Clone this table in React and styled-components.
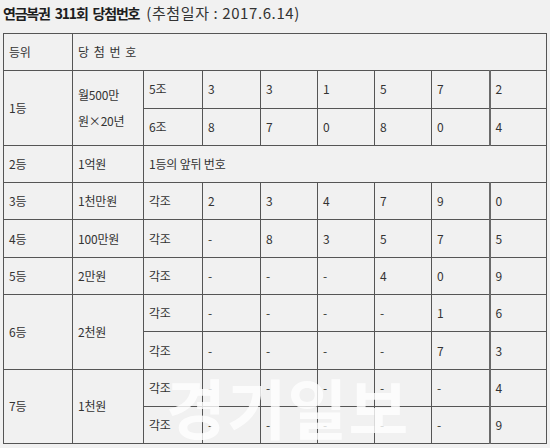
import styled, { createGlobalStyle } from 'styled-components'

const GlobalStyle = createGlobalStyle`
  html, body {
    margin: 0;
    padding: 0;
    background: #f1f1f1;
  }
  body {
    font-family: 'Noto Sans CJK KR', 'Noto Sans', sans-serif;
    color: #333;
    overflow: hidden;
  }
`

const COLS = [69, 71, 59, 58, 57, 57, 57, 58, 57]

const Page = styled.div`
  position: relative;
  width: 550px;
  height: 448px;
  overflow: hidden;
  padding: 2px 0 0 3px;
  box-sizing: border-box;
`

const TitleRow = styled.div`
  display: flex;
  align-items: baseline;
  gap: 7px;
  height: 31px;
  line-height: 22px;
  color: #222;
`

const Title = styled.h2`
  margin: 0;
  font-size: 14px;
  font-weight: 700;
  letter-spacing: -1.2px;
  word-spacing: 3px;
  color: #1e1e1e;
`

const DrawDate = styled.span`
  font-size: 15px;
  letter-spacing: 0.6px;
  color: #333;
`

const Table = styled.table`
  border-collapse: collapse;
  table-layout: fixed;
  width: 544px;
  border: 1px solid #555;
`

const Cell = styled.td`
  border: 1px solid #555;
  border-right: ${(p) => (p.$thick ? '2px solid #6a6a6a' : '1px solid #555')};
  padding: 0 0 0 5px;
  height: 36.3px;
  font-size: 12px;
  line-height: ${(p) => (p.$tall ? 26 : 20)}px;
  color: #333;
  text-align: left;
  vertical-align: middle;
  letter-spacing: ${(p) => (p.$spaced ? '1px' : '-0.2px')};
`

const Watermark = styled.div`
  position: absolute;
  left: 166px;
  top: 359px;
  font-size: 65px;
  font-weight: 700;
  letter-spacing: 1px;
  color: rgba(255, 255, 255, 0.8);
  pointer-events: none;
  white-space: nowrap;
`

const Digits = ({ values }) =>
  values.map((v, i) => (
    <Cell key={i} $thick={i === 4}>
      {v}
    </Cell>
  ))

const App = () => (
  <Page>
    <GlobalStyle />
    <TitleRow>
      <Title>연금복권 311회 당첨번호</Title>
      <DrawDate>(추첨일자 : 2017.6.14)</DrawDate>
    </TitleRow>
    <Table>
      <colgroup>
        {COLS.map((w, i) => (
          <col key={i} style={{ width: w }} />
        ))}
      </colgroup>
      <tbody>
        <tr>
          <Cell>등위</Cell>
          <Cell colSpan={8} $spaced>
            당 첨 번 호
          </Cell>
        </tr>
        <tr>
          <Cell rowSpan={2}>1등</Cell>
          <Cell rowSpan={2} $tall>
            월500만
            <br />
            원×20년
          </Cell>
          <Cell>5조</Cell>
          <Digits values={['3', '3', '1', '5', '7', '2']} />
        </tr>
        <tr>
          <Cell>6조</Cell>
          <Digits values={['8', '7', '0', '8', '0', '4']} />
        </tr>
        <tr>
          <Cell>2등</Cell>
          <Cell>1억원</Cell>
          <Cell colSpan={7}>1등의 앞뒤 번호</Cell>
        </tr>
        <tr>
          <Cell>3등</Cell>
          <Cell>1천만원</Cell>
          <Cell>각조</Cell>
          <Digits values={['2', '3', '4', '7', '9', '0']} />
        </tr>
        <tr>
          <Cell>4등</Cell>
          <Cell>100만원</Cell>
          <Cell>각조</Cell>
          <Digits values={['-', '8', '3', '5', '7', '5']} />
        </tr>
        <tr>
          <Cell>5등</Cell>
          <Cell>2만원</Cell>
          <Cell>각조</Cell>
          <Digits values={['-', '-', '-', '4', '0', '9']} />
        </tr>
        <tr>
          <Cell rowSpan={2}>6등</Cell>
          <Cell rowSpan={2}>2천원</Cell>
          <Cell>각조</Cell>
          <Digits values={['-', '-', '-', '-', '1', '6']} />
        </tr>
        <tr>
          <Cell>각조</Cell>
          <Digits values={['-', '-', '-', '-', '7', '3']} />
        </tr>
        <tr>
          <Cell rowSpan={2}>7등</Cell>
          <Cell rowSpan={2}>1천원</Cell>
          <Cell>각조</Cell>
          <Digits values={['-', '-', '-', '-', '-', '4']} />
        </tr>
        <tr>
          <Cell>각조</Cell>
          <Digits values={['-', '-', '-', '-', '-', '9']} />
        </tr>
      </tbody>
    </Table>
    <Watermark>경기일보</Watermark>
  </Page>
)

export default App
